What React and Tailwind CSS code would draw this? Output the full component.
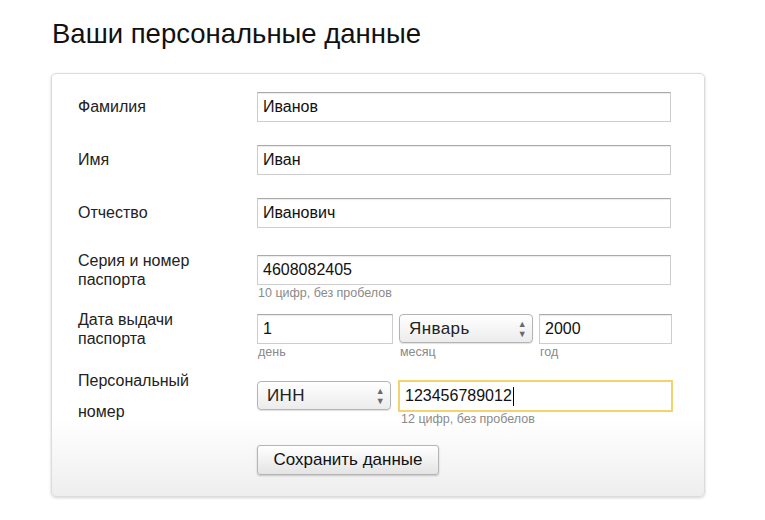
import React from "react";

const font = { fontFamily: '"Liberation Sans", Arial, sans-serif' };

function Input({ value, className = "", focused = false, caret = false }) {
  return (
    <div
      className={
        "h-[30px] flex items-center px-[5px] text-[16px] text-[#111] bg-white " +
        (focused
          ? "border-2 border-[#f3d36b] h-[32px] px-[4px] "
          : "border border-[#cdcdcd] border-t-[#a9a9a9] shadow-[inset_0_1px_1px_rgba(0,0,0,0.08)] ") +
        className
      }
    >
      <span>{value}</span>
      {caret && <span className="inline-block w-px h-[19px] bg-black ml-px" />}
    </div>
  );
}

function Select({ value, className = "" }) {
  return (
    <div
      className={
        "h-[29px] flex items-center justify-between pl-[9px] pr-[5px] rounded-[4px] border border-[#b4b4b4] bg-linear-to-b from-white to-[#ececec] shadow-[0_1px_1px_rgba(0,0,0,0.12)] text-[17px] tracking-[0.4px] text-[#222] " +
        className
      }
    >
      <span>{value}</span>
      <span className="flex flex-col items-center leading-none text-[#6a6a6a]">
        <span className="text-[9px] leading-[10px]">▲</span>
        <span className="text-[9px] leading-[10px]">▼</span>
      </span>
    </div>
  );
}

function Hint({ children, className = "" }) {
  return (
    <div className={"text-[12.5px] leading-[14px] text-[#8a8a8a] pl-[1px] " + className}>
      {children}
    </div>
  );
}

export default function App() {
  return (
    <div className="w-[765px] h-[520px] bg-white overflow-hidden" style={font}>
      <h1 className="pl-[52px] pt-[18px] text-[27.5px] leading-[32px] text-[#111]">
        Ваши персональные данные
      </h1>
      <div className="ml-[51px] mt-[23px] w-[654px] h-[424px] rounded-[5px] border border-[#dcdcdc] shadow-[0_1px_3px_rgba(0,0,0,0.18)] bg-linear-to-b from-white from-[82%] to-[#eeeeee] pl-[26px] pt-[18px]">
        <div className="flex items-center">
          <div className="w-[179px] text-[16px] text-[#222]">Фамилия</div>
          <Input value="Иванов" className="w-[414px]" />
        </div>
        <div className="flex items-center mt-[23px]">
          <div className="w-[179px] text-[16px] text-[#222]">Имя</div>
          <Input value="Иван" className="w-[414px]" />
        </div>
        <div className="flex items-center mt-[23px]">
          <div className="w-[179px] text-[16px] text-[#222]">Отчество</div>
          <Input value="Иванович" className="w-[414px]" />
        </div>
        <div className="flex mt-[27px]">
          <div className="w-[179px] h-[30px] flex items-center">
            <div className="text-[16px] leading-[19px] text-[#222]">
              Серия и номер
              <br />
              паспорта
            </div>
          </div>
          <div>
            <Input value="4608082405" className="w-[414px]" />
            <Hint className="mt-[1px]">10 цифр, без пробелов</Hint>
          </div>
        </div>
        <div className="flex mt-[14px]">
          <div className="w-[179px] h-[30px] flex items-center">
            <div className="text-[16px] leading-[19px] text-[#222]">
              Дата выдачи
              <br />
              паспорта
            </div>
          </div>
          <div className="flex gap-[6px]">
            <div>
              <Input value="1" className="w-[136px]" />
              <Hint className="mt-[1px]">день</Hint>
            </div>
            <div>
              <Select value="Январь" className="w-[134px]" />
              <Hint className="mt-[2px]">месяц</Hint>
            </div>
            <div>
              <Input value="2000" className="w-[133px]" />
              <Hint className="mt-[1px]">год</Hint>
            </div>
          </div>
        </div>
        <div className="flex mt-[21px]">
          <div className="w-[179px] h-[32px] flex items-center">
            <div className="text-[16px] leading-[31px] text-[#222]">
              Персональный
              <br />
              номер
            </div>
          </div>
          <div className="flex gap-[7px]">
            <Select value="ИНН" className="w-[134px] mt-[1px]" />
            <div>
              <Input value="123456789012" focused caret className="w-[275px]" />
              <Hint className="pl-[3px]">12 цифр, без пробелов</Hint>
            </div>
          </div>
        </div>
        <div className="flex mt-[19px]">
          <div className="w-[179px]" />
          <button className="h-[30px] w-[182px] rounded-[3px] border border-[#b5b5b5] bg-linear-to-b from-white to-[#e4e4e4] shadow-[0_1px_2px_rgba(0,0,0,0.2)] text-[17px] text-[#111]">
            Сохранить данные
          </button>
        </div>
      </div>
    </div>
  );
}
